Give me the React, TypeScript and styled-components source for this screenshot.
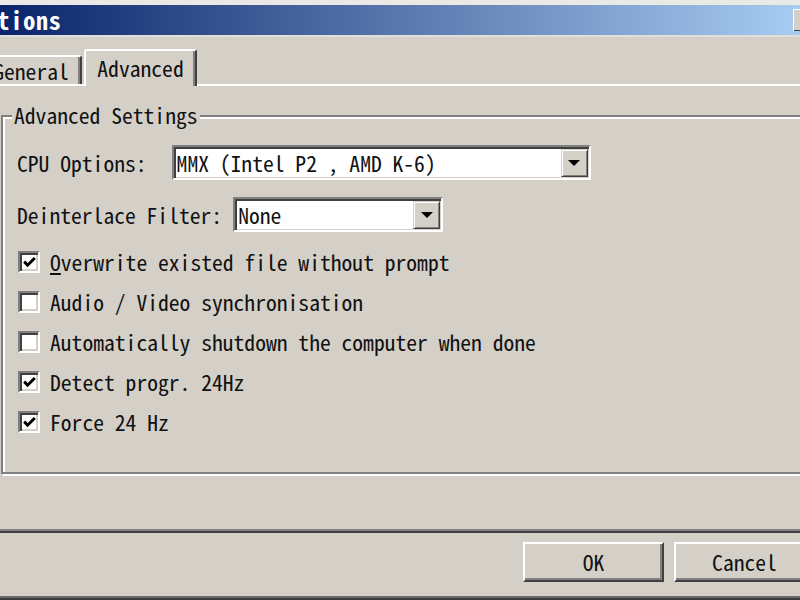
import React from "react";
import styled, { createGlobalStyle } from "styled-components";

const FONT = `"Noto Sans Mono CJK SC", "Liberation Mono", monospace`;

const Global = createGlobalStyle`
  html, body { margin: 0; padding: 0; background: #d4d0c8; }
  body { width: 800px; height: 600px; overflow: hidden; }
  * { box-sizing: border-box; }
`;

const Window = styled.div`
  width: 800px;
  height: 600px;
  overflow: hidden;
  background: #d4d0c8;
  display: flex;
  flex-direction: column;
  font-family: ${FONT};
  font-size: 21.6px;
  color: #111;
  border-top: 5px solid #ebe9e5;
  padding-bottom: 4px;
  box-shadow: inset 0 -2px 0 #3c3c3c, inset 0 -4px 0 #6a6a6a;
`;

const TitleBar = styled.div`
  flex: none;
  height: 32px;
  display: flex;
  align-items: center;
  justify-content: space-between;
  background: linear-gradient(90deg, #0a246a 0%, #a6caf0 99%);
  border-bottom: 2px solid #e2dfda;
`;

const TitleText = styled.span`
  margin-left: -28px;
  color: #fff;
  font-weight: bold;
  font-size: 24px;
  letter-spacing: 0.8px;
  line-height: 1;
`;

const TitleButton = styled.div`
  width: 24px;
  height: 22px;
  margin-right: -17px;
  background: #d4d0c8;
  border-top: 1px solid #fff;
  border-left: 1px solid #fff;
  box-shadow: inset -1px -1px 0 #404040;
`;

const Body = styled.div`
  flex: 1;
  display: flex;
  flex-direction: column;
  padding-top: 12px;
`;

const TabStrip = styled.div`
  flex: none;
  height: 35px;
  display: flex;
  align-items: flex-end;
  margin-left: -20px;
  position: relative;
  z-index: 2;
`;

const Tab = styled.div<{ $active?: boolean; $w: number }>`
  width: ${(p) => p.$w}px;
  height: ${(p) => (p.$active ? 37 : 29)}px;
  margin-bottom: ${(p) => (p.$active ? -2 : 0)}px;
  margin-left: ${(p) => (p.$active ? 2 : 0)}px;
  display: flex;
  align-items: ${(p) => (p.$active ? "flex-start" : "center")};
  padding-top: ${(p) => (p.$active ? 4 : 0)}px;
  justify-content: center;
  background: #d4d0c8;
  border-top: 2px solid #fff;
  border-left: 2px solid #fff;
  border-right: 2px solid #404040;
  border-radius: 3px 3px 0 0;
  box-shadow: inset -2px 0 0 #808080;
  line-height: 26px;
`;

const Panel = styled.div`
  flex: none;
  width: 840px;
  height: 449px;
  margin-left: -6px;
  border-top: 2px solid #fff;
  border-left: 2px solid #fff;
  border-bottom: 2px solid #404040;
  box-shadow: inset 0 -2px 0 #808080;
  padding: 29px 0 0 5px;
`;

const GroupBox = styled.div`
  position: relative;
  width: 860px;
  height: 359px;
  border: 2px solid #808080;
  box-shadow: inset 2px 2px 0 #fff, 2px 2px 0 #fff;
  padding: 28px 0 0 14px;
  display: flex;
  flex-direction: column;
`;

const Legend = styled.span`
  position: absolute;
  top: -15px;
  left: 9px;
  padding: 0 2px;
  background: #d4d0c8;
  line-height: 26px;
`;

const SelectRow = styled.div<{ $after: number }>`
  display: flex;
  align-items: center;
  height: 35px;
  margin-bottom: ${(p) => p.$after}px;
`;

const Label = styled.span`
  flex: none;
  white-space: pre;
  line-height: 26px;
`;

const Select = styled.div<{ $gap: number; $w: number }>`
  margin-left: ${(p) => p.$gap}px;
  width: ${(p) => p.$w}px;
  height: 35px;
  display: flex;
  align-items: center;
  background: #fff;
  border: 2px solid;
  border-color: #808080 #fff #fff #808080;
  box-shadow: inset 2px 2px 0 #404040, inset -1px -1px 0 #d4d0c8;
  padding: 2px 1px 1px 3px;
  white-space: pre;
  line-height: 26px;
`;

const SelectValue = styled.span`
  flex: 1;
`;

const DropButton = styled.div`
  flex: none;
  width: 27px;
  height: 28px;
  display: flex;
  align-items: center;
  justify-content: center;
  background: #d4d0c8;
  border-top: 1px solid #d4d0c8;
  border-left: 1px solid #d4d0c8;
  border-right: 1px solid #404040;
  border-bottom: 1px solid #404040;
  box-shadow: inset 1px 1px 0 #fff, inset -1px -1px 0 #808080;
`;

const Arrow = styled.span`
  width: 0;
  height: 0;
  border-left: 6px solid transparent;
  border-right: 6px solid transparent;
  border-top: 6px solid #000;
`;

const CheckRow = styled.div`
  display: flex;
  align-items: center;
  height: 40px;
  gap: 10px;
  padding-left: 1px;
`;

const Box = styled.span`
  flex: none;
  width: 22px;
  height: 22px;
  background: #fff;
  border: 2px solid;
  border-color: #808080 #fff #fff #808080;
  box-shadow: inset 2px 2px 0 #404040, inset -2px -2px 0 #d4d0c8;
  display: flex;
  align-items: center;
  justify-content: center;
`;

const Mnemonic = styled.span`
  text-decoration: underline;
  text-underline-offset: 2px;
`;

const ButtonRow = styled.div`
  flex: 1;
  display: flex;
  justify-content: flex-end;
  align-items: flex-start;
  gap: 10px;
  padding-top: 9px;
  margin-right: -15px;
`;

const Button = styled.div`
  width: 141px;
  height: 40px;
  display: flex;
  align-items: center;
  justify-content: center;
  background: #d4d0c8;
  border-top: 2px solid #fff;
  border-left: 2px solid #fff;
  border-right: 2px solid #404040;
  border-bottom: 2px solid #404040;
  box-shadow: inset -2px -2px 0 #808080;
  line-height: 26px;
`;

const Check = () => (
  <svg width="13" height="13" viewBox="0 0 13 13">
    <path d="M1.2 5.6 L4.6 9.2 L11.8 2" fill="none" stroke="#000" strokeWidth="3" />
  </svg>
);

const options: { label: React.ReactNode; checked: boolean }[] = [
  { label: <><Mnemonic>O</Mnemonic>verwrite existed file without prompt</>, checked: true },
  { label: "Audio / Video synchronisation", checked: false },
  { label: "Automatically shutdown the computer when done", checked: false },
  { label: "Detect progr. 24Hz", checked: true },
  { label: "Force 24 Hz", checked: true },
];

export default function App() {
  return (
    <>
      <Global />
      <Window>
        <TitleBar>
          <TitleText>Options</TitleText>
          <TitleButton />
        </TitleBar>
        <Body>
          <TabStrip>
            <Tab $w={102}>General</Tab>
            <Tab $w={113} $active>Advanced</Tab>
          </TabStrip>
          <Panel>
            <GroupBox>
              <Legend>Advanced Settings</Legend>
              <SelectRow $after={17}>
                <Label>CPU Options:</Label>
                <Select $gap={25} $w={419}>
                  <SelectValue>MMX (Intel P2 , AMD K-6)</SelectValue>
                  <DropButton><Arrow /></DropButton>
                </Select>
              </SelectRow>
              <SelectRow $after={10}>
                <Label>Deinterlace Filter:</Label>
                <Select $gap={11} $w={210}>
                  <SelectValue>None</SelectValue>
                  <DropButton><Arrow /></DropButton>
                </Select>
              </SelectRow>
              {options.map((o, i) => (
                <CheckRow key={i}>
                  <Box>{o.checked && <Check />}</Box>
                  <Label>{o.label}</Label>
                </CheckRow>
              ))}
            </GroupBox>
          </Panel>
          <ButtonRow>
            <Button>OK</Button>
            <Button>Cancel</Button>
          </ButtonRow>
        </Body>
      </Window>
    </>
  );
}
